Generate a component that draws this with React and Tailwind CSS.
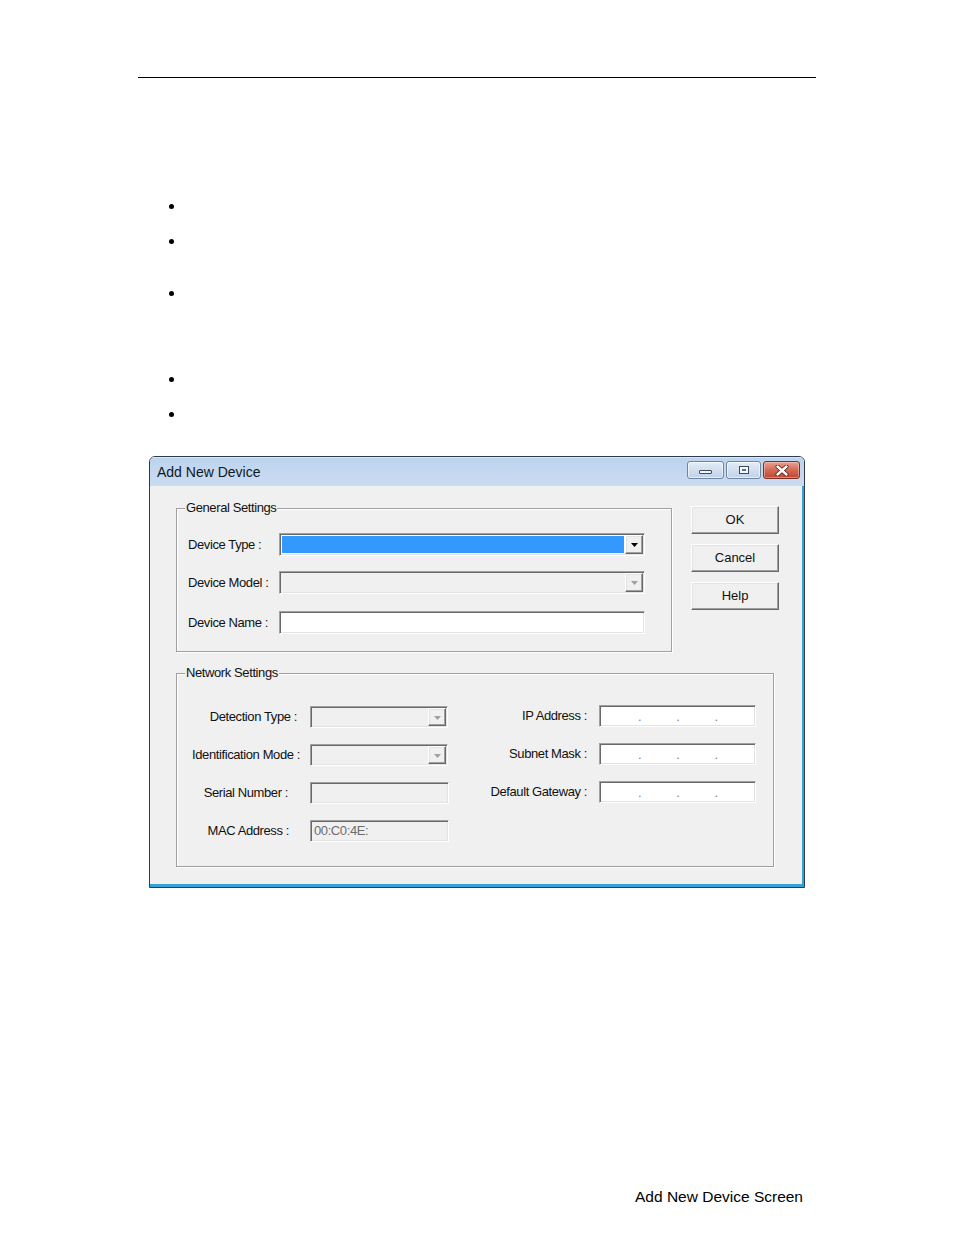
import React from "react";

const sunken =
  "border border-t-[#a0a0a0] border-l-[#a0a0a0] border-b-white border-r-white shadow-[inset_1px_1px_0_#696969,inset_-1px_-1px_0_#e3e3e3]";
const raised =
  "border border-t-white border-l-white border-b-[#696969] border-r-[#696969] shadow-[inset_-1px_-1px_0_#a0a0a0,inset_1px_1px_0_#e3e3e3]";
const etched =
  "border border-[#a0a0a0] shadow-[inset_1px_1px_0_#ffffff,1px_1px_0_#ffffff]";

function Arrow({ disabled }) {
  return (
    <svg width="7" height="4" viewBox="0 0 7 4">
      <path d="M0 0h7L3.5 4z" fill={disabled ? "#a0a0a0" : "#000"} />
    </svg>
  );
}

function Combo({ className, selected, disabled }) {
  return (
    <div className={`${sunken} ${className} p-px flex bg-[#f0f0f0]`}>
      <div className={`flex-1 ${disabled ? "bg-[#f0f0f0]" : "bg-white"} p-px`}>
        {selected && <div className="w-full h-full bg-[#3399ff]" />}
      </div>
      <div className={`${raised} w-[18px] flex items-center justify-center bg-[#f0f0f0] pt-[1px]`}>
        <Arrow disabled={disabled} />
      </div>
    </div>
  );
}

function Button({ children }) {
  return (
    <div className={`${raised} w-[88px] h-[28px] bg-[#f0f0f0] flex items-center justify-center`}>
      {children}
    </div>
  );
}

function IpBox() {
  return (
    <div className={`${sunken} w-[157px] h-[22px] bg-white flex items-center pl-[38px] gap-[35px] text-[#808080] leading-none`}>
      <span>.</span>
      <span>.</span>
      <span>.</span>
    </div>
  );
}

export default function App() {
  return (
    <div className="w-[954px] h-[1235px] bg-white font-['Liberation_Sans',Arial,sans-serif] text-black">
      <div className="pt-[77px] pl-[138px]">
        <div className="w-[678px] h-px bg-black" />
      </div>

      <div className="pl-[169px] flex flex-col">
        <span className="mt-[126px] w-[5px] h-[5px] rounded-full bg-black" />
        <span className="mt-[30px] w-[5px] h-[5px] rounded-full bg-black" />
        <span className="mt-[47px] w-[5px] h-[5px] rounded-full bg-black" />
        <span className="mt-[81px] w-[5px] h-[5px] rounded-full bg-black" />
        <span className="mt-[30px] w-[5px] h-[5px] rounded-full bg-black" />
      </div>

      {/* Dialog */}
      <div className="ml-[149px] mt-[39px] w-[656px] h-[432px] border border-[#2f3b4b] rounded-t-[6px] flex flex-col overflow-hidden">
        <div className="h-[29px] shrink-0 bg-gradient-to-b from-[#bcd3ee] to-[#cbdcf1] flex items-start pl-[7px] pr-[4px] shadow-[inset_0_1px_0_#dbe7f5]">
          <span className="text-[14px] leading-[16px] mt-[7px] text-[#101820]">Add New Device</span>
          <div className="ml-auto mt-[4px] flex gap-[2px]">
            <div className="w-[37px] h-[18px] rounded-[3px] border border-[#6f86a3] bg-gradient-to-b from-[#e4ecf7] to-[#c0d2e8] shadow-[inset_0_0_0_1px_rgba(255,255,255,0.6)] flex items-end justify-center pb-[4px]">
              <div className="w-[13px] h-[4px] border border-[#3c4a5c] bg-[#f4f7fb] rounded-[1px]" />
            </div>
            <div className="w-[35px] h-[18px] rounded-[3px] border border-[#6f86a3] bg-gradient-to-b from-[#e4ecf7] to-[#c0d2e8] shadow-[inset_0_0_0_1px_rgba(255,255,255,0.6)] flex items-center justify-center">
              <div className="w-[10px] h-[8px] border border-[#3c4a5c] bg-[#f4f7fb] flex items-center justify-center">
                <div className="w-[4px] h-[2px] bg-[#5d6f86]" />
              </div>
            </div>
            <div className="w-[37px] h-[18px] rounded-[3px] border border-[#7a2e24] bg-gradient-to-b from-[#e8a292] via-[#d26a55] to-[#c14331] shadow-[inset_0_0_0_1px_rgba(255,220,210,0.45)] flex items-center justify-center">
              <svg width="14" height="11" viewBox="0 0 14 11">
                <path d="M2.5 1.5L11.5 9.5M11.5 1.5L2.5 9.5" stroke="#5a1a12" strokeWidth="4" strokeLinecap="round" />
                <path d="M2.5 1.5L11.5 9.5M11.5 1.5L2.5 9.5" stroke="#ffffff" strokeWidth="2.4" strokeLinecap="round" />
              </svg>
            </div>
          </div>
        </div>

        <div className="flex-1 bg-[#f0f0f0] border-r-2 border-b-[3px] border-[#35a3d9] pl-[26px] pt-[14px] text-[13px] leading-[16px] tracking-[-0.4px] text-[#111]">
          <div className="flex">
            <fieldset className={`${etched} w-[496px]`}>
              <legend className="ml-[8px] px-[1px] bg-[#f0f0f0] leading-[16px]">General Settings</legend>
              <div className="pl-[11px] pt-[17px] pb-[17px] flex flex-col">
                <div className="flex items-center h-[23px]">
                  <span className="w-[91px]">Device Type :</span>
                  <Combo className="w-[366px] h-[23px]" selected />
                </div>
                <div className="flex items-center h-[23px] mt-[15px]">
                  <span className="w-[91px]">Device Model :</span>
                  <Combo className="w-[366px] h-[23px]" disabled />
                </div>
                <div className="flex items-center h-[23px] mt-[17px]">
                  <span className="w-[91px]">Device Name :</span>
                  <div className={`${sunken} w-[366px] h-[23px] bg-white`} />
                </div>
              </div>
            </fieldset>
            <div className="ml-[19px] mt-[6px] flex flex-col gap-[10px] tracking-normal">
              <Button>OK</Button>
              <Button>Cancel</Button>
              <Button>Help</Button>
            </div>
          </div>

          <fieldset className={`${etched} w-[598px] mt-[13px]`}>
            <legend className="ml-[8px] px-[1px] bg-[#f0f0f0] leading-[16px]">Network Settings</legend>
            <div className="pt-[25px] pb-[24px] flex">
              <div className="flex flex-col gap-[16px]">
                <div className="flex items-center h-[22px]">
                  <span className="w-[133px] text-right pr-[13px]">Detection Type :</span>
                  <Combo className="w-[138px] h-[22px]" disabled />
                </div>
                <div className="flex items-center h-[22px]">
                  <span className="w-[133px] text-right pr-[10px]">Identification Mode :</span>
                  <Combo className="w-[138px] h-[22px]" disabled />
                </div>
                <div className="flex items-center h-[22px]">
                  <span className="w-[133px] text-right pr-[22px]">Serial Number :</span>
                  <div className={`${sunken} w-[139px] h-[22px] bg-[#f0f0f0]`} />
                </div>
                <div className="flex items-center h-[22px]">
                  <span className="w-[133px] text-right pr-[21px]">MAC Address :</span>
                  <div className={`${sunken} w-[139px] h-[22px] bg-[#f0f0f0] flex items-center pl-[3px] text-[#6d6d6d]`}>
                    00:C0:4E:
                  </div>
                </div>
              </div>
              <div className="flex flex-col gap-[16px] -mt-px">
                <div className="flex items-center h-[22px]">
                  <span className="w-[150px] text-right pr-[12px]">IP Address :</span>
                  <IpBox />
                </div>
                <div className="flex items-center h-[22px]">
                  <span className="w-[150px] text-right pr-[12px]">Subnet Mask :</span>
                  <IpBox />
                </div>
                <div className="flex items-center h-[22px]">
                  <span className="w-[150px] text-right pr-[12px]">Default Gateway :</span>
                  <IpBox />
                </div>
              </div>
            </div>
          </fieldset>
        </div>
      </div>

      <div className="mt-[300px] pr-[151px] text-right text-[15.5px] leading-[18px]">
        Add New Device Screen
      </div>
    </div>
  );
}
